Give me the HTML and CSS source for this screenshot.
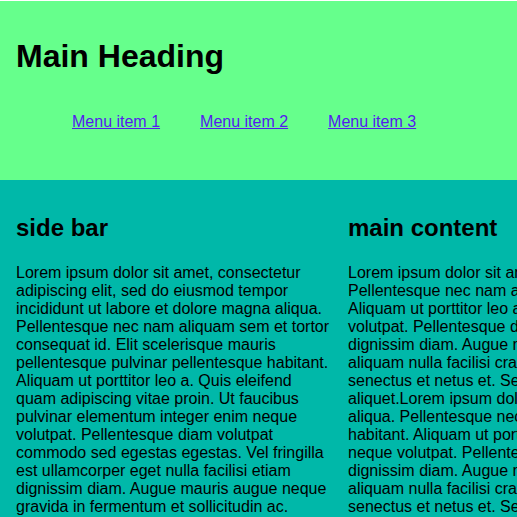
FILE: index.html
```html
<!DOCTYPE html>
<html lang="en">
<head>
<meta charset="utf-8">
<title>Layout</title>
<link rel="stylesheet" href="styles.css">
</head>
<body>
<header class="site-header">
  <h1 class="site-title">Main Heading</h1>
  <nav class="site-nav">
    <ul class="menu">
      <li class="menu-item"><a href="#">Menu item 1</a></li>
      <li class="menu-item"><a href="#">Menu item 2</a></li>
      <li class="menu-item"><a href="#">Menu item 3</a></li>
    </ul>
  </nav>
</header>
<div class="layout">
  <aside class="sidebar">
    <h2 class="section-title">side bar</h2>
    <p class="text">Lorem ipsum dolor sit amet, consectetur adipiscing elit, sed do eiusmod tempor incididunt ut labore et dolore magna aliqua. Pellentesque nec nam aliquam sem et tortor consequat id. Elit scelerisque mauris pellentesque pulvinar pellentesque habitant. Aliquam ut porttitor leo a. Quis eleifend quam adipiscing vitae proin. Ut faucibus pulvinar elementum integer enim neque volutpat. Pellentesque diam volutpat commodo sed egestas egestas. Vel fringilla est ullamcorper eget nulla facilisi etiam dignissim diam. Augue mauris augue neque gravida in fermentum et sollicitudin ac.</p>
  </aside>
  <main class="content">
    <h2 class="section-title">main content</h2>
    <p class="text">Lorem ipsum dolor sit amet, consectetur adipiscing elit, sed do eiusmod tempor incididunt ut labore et dolore magna aliqua. Pellentesque nec nam aliquam sem et tortor consequat id. Elit scelerisque mauris pellentesque pulvinar pellentesque habitant. Aliquam ut porttitor leo a. Quis eleifend quam adipiscing vitae proin. Ut faucibus pulvinar elementum integer enim neque volutpat. Pellentesque diam volutpat commodo sed egestas egestas. Vel fringilla est ullamcorper eget nulla facilisi etiam dignissim diam. Augue mauris augue neque gravida in fermentum et sollicitudin ac. Orci phasellus egestas tellus rutrum aliquam nulla facilisi cras fermentum odio eu feugiat pretium nibh ipsum consequat nisl vel pretium lectus quam id leo in vitae senectus et netus et. Sed faucibus turpis in eu mi bibendum neque egestas congue quisque egestas diam in arcu cursus aliquet.Lorem ipsum dolor sit amet, consectetur adipiscing elit, sed do eiusmod tempor incididunt ut labore et dolore magna aliqua. Pellentesque nec nam aliquam sem et tortor consequat id. Elit scelerisque mauris pellentesque pulvinar pellentesque habitant. Aliquam ut porttitor leo a. Quis eleifend quam adipiscing vitae proin. Ut faucibus pulvinar elementum integer enim neque volutpat. Pellentesque diam volutpat commodo sed egestas egestas. Vel fringilla est ullamcorper eget nulla facilisi etiam dignissim diam. Augue mauris augue neque gravida in fermentum et sollicitudin ac. Orci phasellus egestas tellus rutrum aliquam nulla facilisi cras fermentum odio eu feugiat pretium nibh ipsum consequat nisl vel pretium lectus quam id leo in vitae senectus et netus et. Sed faucibus turpis in eu mi bibendum neque egestas congue quisque egestas diam in arcu cursus aliquet.</p>
  </main>
</div>
</body>
</html>
```

FILE: styles.css
```css
html, body {
  margin: 0;
}

body {
  padding-top: 1px;
  background: #ffffff;
  color: #000000;
  font-family: "Liberation Sans", Arial, sans-serif;
  font-size: 16px;
}

.site-header {
  background: #66ff8c;
  padding: 16px 16px 16px;
}

.site-title {
  margin: 21.44px 0 0;
  font-size: 32px;
  font-weight: bold;
}

.menu {
  display: flex;
  gap: 40px;
  list-style: none;
  margin: 37.44px 0 32.92px;
  padding: 0 0 0 56px;
}

.menu-item a {
  color: #551aee;
  text-decoration: underline;
}

.layout {
  display: flex;
  align-items: flex-start;
  gap: 16px;
  padding: 16px;
  background: #00b8a9;
  overflow: hidden;
}

.sidebar {
  flex: none;
  width: 316px;
}

.content {
  flex: none;
  width: 902px;
}

.section-title {
  margin: 18.7px 0 21.7px;
  font-size: 24px;
  font-weight: bold;
}

.text {
  margin: 0;
}
```
